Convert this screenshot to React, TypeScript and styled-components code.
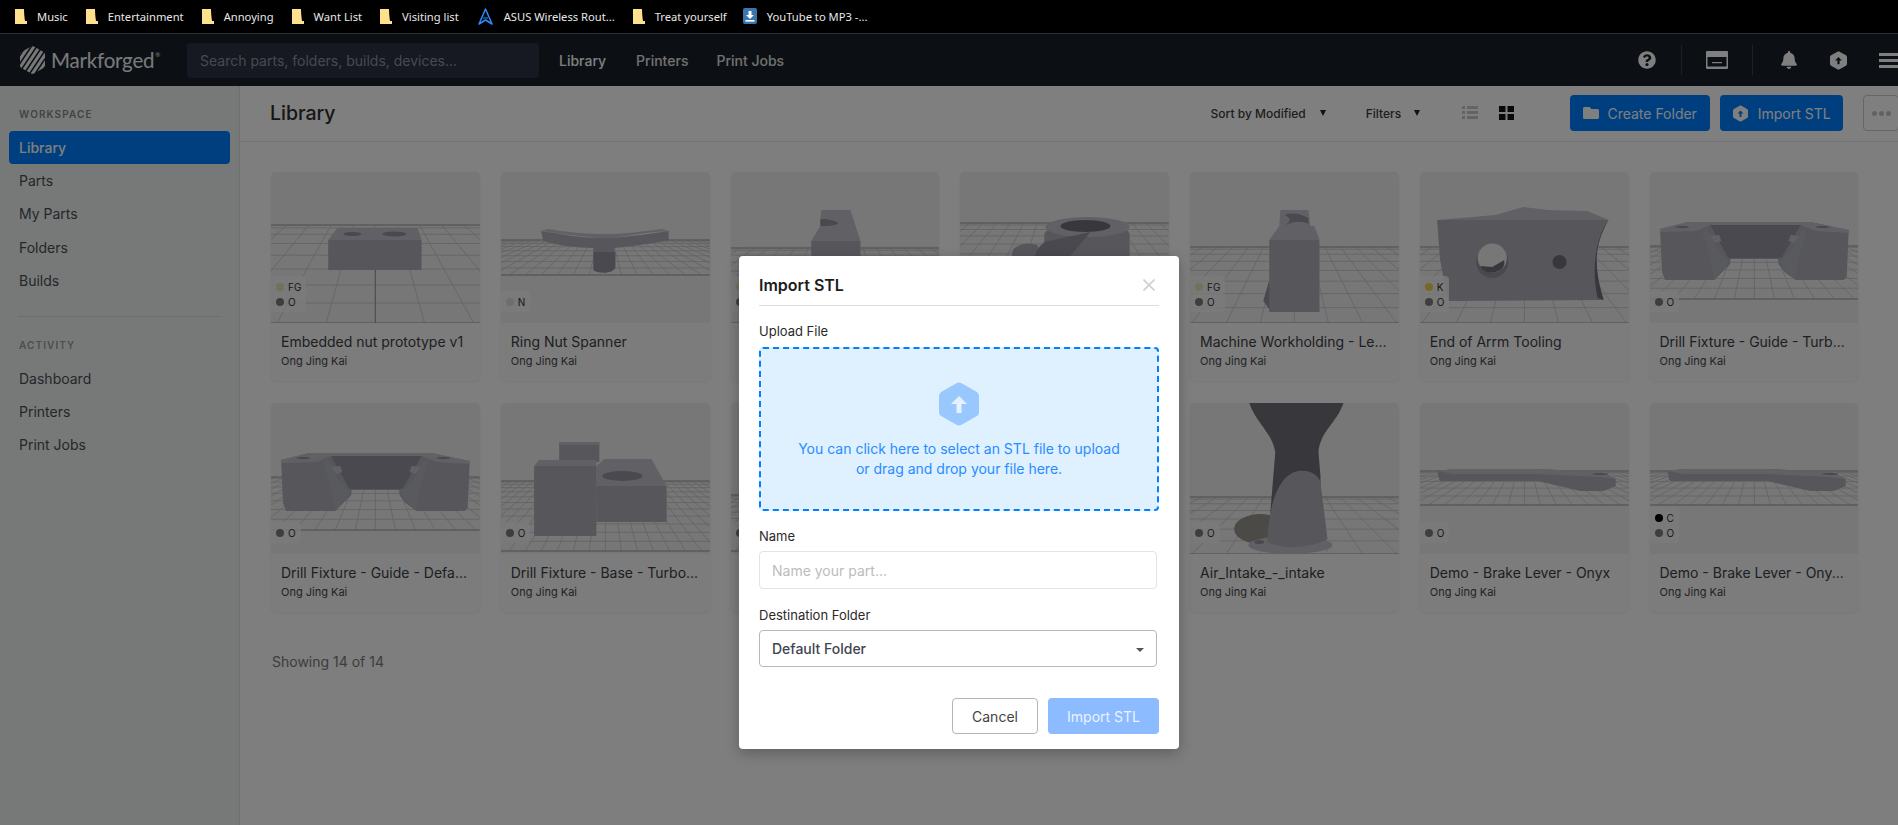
import React from "react";
import styled, { createGlobalStyle } from "styled-components";
import { FaBell, FaFolder, FaQuestionCircle } from "react-icons/fa";

const Global = createGlobalStyle`
  html, body { margin: 0; padding: 0; height: 100%; overflow: hidden; background: #000; }
  body { font-family: Inter, "Noto Sans", sans-serif; }
  * { box-sizing: border-box; }
`;

const Bookmarks = styled.div`
  height: 34px;
  background: #000;
  border-bottom: 1px solid #2c2f2f;
  display: flex;
  align-items: center;
  padding: 0 0 1px 15px;
  gap: 18px;
`;
const Bookmark = styled.div`
  display: flex;
  align-items: center;
  gap: 10px;
  color: #e8e8e8;
  font: 11.2px "Noto Sans", sans-serif;
  white-space: nowrap;
  &:last-child {
    margin-left: -2px;
  }
`;

const Page = styled.div`
  position: relative;
  height: 791px;
  overflow: hidden;
  display: flex;
  flex-direction: column;
`;
const TopBar = styled.div`
  height: 52px;
  flex: none;
  background: #19202a;
  display: flex;
  align-items: center;
  padding-left: 20px;
`;
const Logo = styled.div`
  display: flex;
  align-items: center;
  gap: 6px;
  width: 167px;
  color: #f4f4f4;
  font: 400 20.5px Lato, sans-serif;
  letter-spacing: -0.2px;
`;
const Reg = styled.sup`
  font-size: 6px;
  margin-left: 1px;
  vertical-align: 11px;
  line-height: 0;
`;
const Search = styled.div`
  width: 352px;
  height: 35px;
  background: #2d3342;
  border-radius: 4px;
  color: #8d93a1;
  font-size: 14px;
  display: flex;
  align-items: center;
  padding-left: 13px;
`;
const Nav = styled.div<{ $active?: boolean; $ml: number }>`
  margin-left: ${(p) => p.$ml}px;
  color: ${(p) => (p.$active ? "#ffffff" : "#e2e2e2")};
  font-size: 14px;
  font-weight: 500;
`;
const TopIcons = styled.div`
  margin-left: auto;
  display: flex;
  align-items: center;
  color: #ffffff;
`;
const IconSlot = styled.div<{ $ml: number }>`
  margin-left: ${(p) => p.$ml}px;
  display: flex;
  align-items: center;
`;
const VRule = styled.div<{ $ml: number }>`
  margin-left: ${(p) => p.$ml}px;
  width: 1px;
  height: 30px;
  background: #3b424d;
`;

const Body = styled.div`
  flex: 1;
  display: flex;
  min-height: 0;
`;
const Sidebar = styled.div`
  width: 240px;
  flex: none;
  background: #eef3f1;
  border-right: 1px solid #dde1e0;
  padding: 22px 9px 0;
`;
const SideHead = styled.div<{ $dim?: boolean }>`
  font-size: 10px;
  font-weight: 600;
  letter-spacing: 1.1px;
  line-height: 12px;
  margin-left: 10px;
  margin-bottom: 11px;
  color: ${(p) => (p.$dim ? "#9a9a9a" : "#868686")};
`;
const SideItem = styled.div<{ $active?: boolean }>`
  height: 33.2px;
  line-height: 33px;
  padding-left: 10px;
  font-size: 14px;
  border-radius: 4px;
  background: ${(p) => (p.$active ? "#007fff" : "transparent")};
  color: ${(p) => (p.$active ? "#ffffff" : "#4a4d55")};
  font-weight: ${(p) => (p.$active ? 500 : 400)};
`;
const SideRule = styled.div`
  height: 1px;
  background: #d9dcdb;
  margin: 19px 10px 22px 9px;
`;

const Main = styled.div`
  flex: 1;
  min-width: 0;
  background: #fcfcfc;
  display: flex;
  flex-direction: column;
`;
const Header = styled.div`
  height: 56px;
  flex: none;
  background: #fff;
  border-bottom: 1px solid #e4e4e4;
  display: flex;
  align-items: center;
  padding: 0 0 1px 30px;
`;
const Title = styled.div`
  width: 66px;
  font-size: 19.5px;
  font-weight: 500;
  color: #2c2c2c;
`;
const Tool = styled.div<{ $ml: number }>`
  margin-left: ${(p) => p.$ml}px;
  font-size: 12px;
  font-weight: 500;
  color: #3c3c3c;
  white-space: nowrap;
`;
const Caret = styled.div<{ $ml: number }>`
  margin-left: ${(p) => p.$ml}px;
  width: 0;
  height: 0;
  border-left: 3.5px solid transparent;
  border-right: 3.5px solid transparent;
  border-top: 6px solid #222;
`;
const ToolIcon = styled.div<{ $ml: number }>`
  margin-left: ${(p) => p.$ml}px;
  display: flex;
`;
const ToolRule = styled.div`
  margin-left: 10px;
  width: 1px;
  height: 18px;
  background: #ddd;
`;
const PrimaryButton = styled.div<{ $ml: number; $w: number; $gap: number }>`
  margin-left: ${(p) => p.$ml}px;
  width: ${(p) => p.$w}px;
  height: 36px;
  flex: none;
  border-radius: 4px;
  background: #007fff;
  color: #fff;
  font-size: 14px;
  font-weight: 400;
  display: flex;
  align-items: center;
  justify-content: center;
  gap: ${(p) => p.$gap}px;
`;
const MoreButton = styled.div`
  margin-left: 20px;
  width: 36px;
  height: 36px;
  flex: none;
  border: 1px solid #ccc;
  border-radius: 4px;
  display: flex;
  align-items: center;
  padding-left: 8px;
  gap: 2px;
`;
const MoreDot = styled.div`
  width: 5px;
  height: 5px;
  border-radius: 50%;
  background: #c4c4c4;
`;

const Grid = styled.div`
  display: grid;
  grid-template-columns: repeat(7, 208.75px);
  column-gap: 21px;
  row-gap: 22px;
  padding: 30px 0 0 31px;
`;
const Card = styled.div`
  height: 209px;
  background: #f8f8f8;
  border-radius: 5px;
  overflow: hidden;
  box-shadow: 0 1px 3px rgba(0, 0, 0, 0.06);
`;
const ThumbBox = styled.div`
  position: relative;
  height: 151px;
  background: #eeeeee;
`;
const ThumbSvg = styled.svg`
  display: block;
  width: 100%;
  height: 151px;
`;
const Badge = styled.div`
  position: absolute;
  left: 0;
  bottom: 11px;
  background: rgba(245, 245, 245, 0.85);
  border-radius: 0 4px 4px 0;
  padding: 3px 5px;
  display: flex;
  flex-direction: column;
`;
const BadgeRow = styled.div`
  display: flex;
  align-items: center;
  gap: 4px;
  height: 15px;
  font-size: 10px;
  color: #333;
`;
const Dot = styled.div<{ $c: string }>`
  width: 8px;
  height: 8px;
  border-radius: 50%;
  background: ${(p) => p.$c};
`;
const CardBody = styled.div`
  padding: 10px 10px 0 10px;
`;
const CardTitle = styled.div`
  font-size: 14px;
  line-height: 18px;
  color: #3c3f45;
  white-space: nowrap;
`;
const CardSub = styled.div`
  margin-top: 3px;
  font-size: 11px;
  line-height: 14px;
  color: #44474d;
`;
const Showing = styled.div`
  margin: 41px 0 0 32px;
  font-size: 14px;
  color: #7a7a7a;
`;

const Overlay = styled.div`
  position: absolute;
  inset: 0;
  background: rgba(0, 0, 0, 0.5);
`;
const Modal = styled.div`
  margin: 222px 0 0 739px;
  width: 440px;
  height: 493px;
  background: #fff;
  border-radius: 4px;
  box-shadow: 0 4px 14px rgba(0, 0, 0, 0.25);
  padding: 0 20px;
  display: flex;
  flex-direction: column;
`;
const ModalHead = styled.div`
  height: 50px;
  flex: none;
  border-bottom: 1px solid #dedede;
  display: flex;
  align-items: center;
  justify-content: space-between;
  padding: 9px 4px 0 0;
  font-size: 16px;
  font-weight: 600;
  color: #1c1c1c;
`;
const Label = styled.div<{ $mt: number }>`
  margin-top: ${(p) => p.$mt}px;
  font-size: 13px;
  line-height: 16px;
  color: #2a2a2a;
`;
const DropZone = styled.div`
  margin-top: 8px;
  height: 164px;
  border: 2px dashed #007fff;
  border-radius: 4px;
  background: #dff0ff;
  display: flex;
  flex-direction: column;
  align-items: center;
  padding-top: 33px;
  color: #2a8cff;
  font-size: 14px;
  line-height: 20px;
  text-align: center;
`;
const DropText = styled.div`
  margin-top: 13px;
`;
const Field = styled.div<{ $strong?: boolean }>`
  margin-top: 7px;
  width: 398px;
  height: ${(p) => (p.$strong ? 37 : 38)}px;
  flex: none;
  border: 1px solid ${(p) => (p.$strong ? "#b6b8bc" : "#e3e3e3")};
  border-radius: 4px;
  display: flex;
  align-items: center;
  justify-content: space-between;
  padding: 0 12px;
  font-size: 14px;
  font-weight: ${(p) => (p.$strong ? 500 : 400)};
  color: ${(p) => (p.$strong ? "#41454f" : "#bcbcbc")};
`;
const SelectCaret = styled.div`
  margin: 2px 0 0;
  width: 0;
  height: 0;
  border-left: 4px solid transparent;
  border-right: 4px solid transparent;
  border-top: 4px solid #555;
`;
const ModalFoot = styled.div`
  margin-top: 31px;
  display: flex;
  justify-content: flex-end;
  gap: 10px;
`;
const CancelButton = styled.div`
  width: 86px;
  height: 36px;
  border: 1px solid #b4b4b4;
  border-radius: 4px;
  color: #444;
  font-size: 14px;
  display: flex;
  align-items: center;
  justify-content: center;
`;
const ImportButton = styled.div`
  width: 111px;
  height: 36px;
  border-radius: 4px;
  background: #8cbcff;
  color: #eaf3ff;
  font-size: 14px;
  font-weight: 400;
  display: flex;
  align-items: center;
  justify-content: center;
`;

const FolderMark = () => (
  <svg width="12" height="15" viewBox="0 0 12 15">
    <path d="M0 0h9l1 12h2v3H0z" fill="#ffe08c" />
    <path d="M9 0l1 12h2L11 2z" fill="#000" opacity="0.85" />
  </svg>
);
const AsusMark = () => (
  <svg width="17" height="17" viewBox="0 0 17 17">
    <path d="M8.5 1L2 16l6.5-4 6.5 4z" fill="none" stroke="#2c8cff" strokeWidth="1.5" strokeLinejoin="round" />
    <path d="M6 10h5" stroke="#2c8cff" strokeWidth="1" />
  </svg>
);
const YtMark = () => (
  <svg width="14" height="16" viewBox="0 0 14 16">
    <rect width="14" height="16" rx="2" fill="#3a76ad" />
    <path d="M5.500 3h3v4H11L7 11 3 7h2.500z" fill="#fff" />
    <rect x="2.500" y="12" width="9" height="1.6" fill="#fff" />
  </svg>
);
const LogoMark = () => (
  <svg width="25" height="28" viewBox="0 0 25 28">
    <defs>
      <clipPath id="lg">
        <path d="M11 0.600a3 3 0 0 1 3 0l9.500 5.400a3 3 0 0 1 1.500 2.600v10.800a3 3 0 0 1-1.500 2.600l-9.500 5.400a3 3 0 0 1-3 0l-9.500-5.400A3 3 0 0 1 0 19.400V8.600a3 3 0 0 1 1.500-2.600z" />
      </clipPath>
    </defs>
    <g clipPath="url(#lg)" stroke="#f0f0f0" strokeWidth="3">
      {[-8, -2.500, 3, 8.500, 14, 19.500, 25, 30.500].map((o) => (
        <line key={o} x1={o - 10} y1="32" x2={o + 14} y2="-4" />
      ))}
    </g>
  </svg>
);
const HexUp = ({ w, h, fill, arrow }: { w: number; h: number; fill: string; arrow: string }) => (
  <svg width={w} height={h} viewBox="0 0 40 44">
    <path d="M17.5 1.2a5 5 0 0 1 5 0l15 8.6a5 5 0 0 1 2.5 4.3v15.8a5 5 0 0 1-2.5 4.3l-15 8.6a5 5 0 0 1-5 0l-15-8.6A5 5 0 0 1 0 29.9V14.100a5 5 0 0 1 2.5-4.3z" fill={fill} />
    <path d="M20 14l8 8h-5.500v9h-5v-9H12z" fill={arrow} />
  </svg>
);
const TrayIcon = () => (
  <svg width="22" height="18" viewBox="0 0 22 18">
    <rect width="22" height="18" rx="1" fill="currentColor" />
    <rect x="1.500" y="6" width="19" height="9.500" fill="#19202a" />
    <rect x="6" y="11" width="10" height="1.200" fill="currentColor" />
  </svg>
);
const MenuIcon = () => (
  <svg width="19" height="15" viewBox="0 0 19 15" fill="currentColor">
    <rect width="19" height="3" />
    <rect y="6" width="19" height="3" />
    <rect y="12" width="19" height="3" />
  </svg>
);
const ListIcon = () => (
  <svg width="16" height="14" viewBox="0 0 16 14" fill="#c9c9c9">
    {[0, 5, 10].map((y) => (
      <g key={y}>
        <rect x="0" y={y} width="3" height="3" />
        <rect x="5" y={y} width="11" height="3" />
      </g>
    ))}
  </svg>
);
const GridIcon = () => (
  <svg width="15" height="14" viewBox="0 0 15 14" fill="#111">
    <rect width="6.500" height="6" />
    <rect x="8.500" width="6.500" height="6" />
    <rect y="8" width="6.500" height="6" />
    <rect x="8.500" y="8" width="6.500" height="6" />
  </svg>
);

const FRONT = "#acadb6";
const TOP = "#c2c3cb";
const DARK = "#92939e";
const DEEP = "#6e6e78";

const Floor = ({ top, bottom, n = 9, r = 11, sp = 26, vx = 104 }: { top: number; bottom: number; n?: number; r?: number; sp?: number; vx?: number }) => {
  const rows = Array.from({ length: n + 1 }, (_, i) => top + (bottom - top) * Math.pow(i / n, 1.7));
  const rays = Array.from({ length: 2 * r + 1 }, (_, i) => i - r);
  return (
    <g stroke="#c6c6c6" strokeWidth="0.8">
      {rows.map((y) => (
        <line key={y} x1="0" y1={y} x2="208" y2={y} />
      ))}
      {rays.map((k) => (
        <line key={k} x1={vx + k * sp * 0.45} y1={top} x2={vx + k * sp} y2={bottom} />
      ))}
      <line x1="0" y1={top} x2="208" y2={top} stroke="#a8a8a8" strokeWidth="1" />
      <line x1="0" y1={bottom} x2="208" y2={bottom} stroke="#a8a8a8" strokeWidth="1" />
    </g>
  );
};

const Fixture = () => (
  <g>
    <path d="M10 57L38 50H160L198 58L196 105L193 108H145L134 100L128 92V87H80V92L72 100L64 108H15L12 100Z" fill={FRONT} />
    <path d="M10 57L38 50H160L198 58L198 61L165 59L150 53H60L46 59L10 60Z" fill={TOP} />
    <path d="M60 53H150L131 86H78Z" fill={DARK} />
    <path d="M57 56C62 72 70 82 78 88V92L70 100L64 108C62 90 56 72 52 60Z" fill="#b3b4bd" />
    <path d="M152 56C147 72 138 82 130 88V92L137 100L145 108C146 90 152 72 156 60Z" fill="#b3b4bd" />
    <path d="M60 64l9-1 2 6-6 2z" fill={TOP} />
    <path d="M149 64l-9-1-2 6 6 2z" fill={TOP} />
    <ellipse cx="32" cy="55" rx="7" ry="1.200" fill={DARK} />
    <ellipse cx="172" cy="55" rx="7" ry="1.200" fill={DARK} />
  </g>
);
const Lever = () => (
  <g>
    <path d="M18 68L33 66H117L180 69L195 76V83L183 88H160L117 78H33L20 78L18 73Z" fill={FRONT} />
    <path d="M18 68L33 66H117L180 69L195 76L180 74L117 71H33Z" fill={TOP} />
    <ellipse cx="180" cy="71" rx="8" ry="1" fill={DARK} />
  </g>
);

const models: Record<string, React.ReactNode> = {
  nut: (
    <g>
      <Floor top={53} bottom={151} n={8} r={6} sp={49} />
      <line x1="104" y1="98" x2="104" y2="151" stroke="#a0a0a0" strokeWidth="1.200" />
      <path d="M57 68L66 56H146L150 68Z" fill={TOP} />
      <rect x="57" y="68" width="93" height="30" fill={FRONT} />
      <ellipse cx="81" cy="62" rx="9" ry="2" fill={DARK} />
      <ellipse cx="123" cy="62" rx="12" ry="2.500" fill={DARK} />
    </g>
  ),
  spanner: (
    <g>
      <Floor top={68} bottom={103} n={8} r={18} sp={16} />
      <path d="M40 59C60 62 80 66 94 66H112C130 64 150 62 167 59V68C150 72 130 74 113 76V88H92V76C75 76 55 73 42 69Z" fill={FRONT} />
      <path d="M40 59C60 62 80 64 94 66H112C130 63 150 60 167 59L160 57C140 60 120 62 100 62C80 62 60 59 47 57Z" fill={TOP} />
      <path d="M92 80H114V96C110 102 96 102 92 98Z" fill={DARK} />
    </g>
  ),
  block3: (
    <g>
      <Floor top={76} bottom={151} n={8} r={10} sp={30} />
      <path d="M90 38H119L129 69H80L89 54V49L90 38Z" fill={TOP} />
      <path d="M89 47C98 47 105 49 107 51C105 54 96 54 89 54Z" fill={DARK} />
      <rect x="80" y="69" width="49" height="71" fill={FRONT} />
    </g>
  ),
  cylinder: (
    <g>
      <Floor top={51} bottom={151} n={10} r={10} sp={30} />
      <path d="M84 62C90 46 165 46 169 62V120H84Z" fill={FRONT} />
      <ellipse cx="127" cy="55" rx="42" ry="10" fill={TOP} />
      <ellipse cx="125" cy="54" rx="25" ry="6" fill={DEEP} />
      <path d="M84 70L130 60L110 84H70Z" fill={DARK} />
      <path d="M52 80C55 70 75 70 78 74L70 100H52Z" fill={FRONT} />
    </g>
  ),
  work: (
    <g>
      <Floor top={75} bottom={151} n={8} r={9} sp={34} />
      <path d="M79 108L73 129L81 140Z" fill={DARK} />
      <path d="M90 38H118L120 54H124L129 68H79L89 54Z" fill={TOP} />
      <path d="M94 43C104 40 110 42 118 46L118 52C110 48 100 50 94 54C102 48 100 46 94 43Z" fill={DARK} />
      <rect x="79" y="68" width="50" height="72" fill={FRONT} />
    </g>
  ),
  tool: (
    <g>
      <Floor top={75} bottom={151} n={8} r={9} sp={34} />
      <path d="M17 48L75 43L103 35L127 38L167 39L188 48Z" fill={TOP} />
      <path d="M17 48H188C182 58 176 72 176 88C176 104 180 118 183 128L28 129L20 88Z" fill={FRONT} />
      <path d="M188 48C182 58 176 72 176 88C176 104 180 118 183 128L177 126C172 105 172 70 188 48Z" fill={DEEP} />
      <circle cx="72" cy="90" r="16" fill={DARK} />
      <circle cx="72" cy="86" r="14.500" fill="#eeeeee" />
      <path d="M60 94L72 95L84 88L84 92C82 102 64 104 60 94Z" fill={DEEP} />
      <circle cx="139" cy="90" r="7" fill={DEEP} />
    </g>
  ),
  fixture: (
    <g>
      <Floor top={74} bottom={127} n={8} r={14} sp={20} />
      <Fixture />
    </g>
  ),
  base: (
    <g>
      <Floor top={78} bottom={148} n={12} r={18} sp={16} />
      <rect x="58" y="39" width="40" height="20" fill={FRONT} />
      <path d="M58 39H98V42H58Z" fill={TOP} />
      <path d="M95 63L103 56H150L165 83H95Z" fill={TOP} />
      <ellipse cx="121" cy="73" rx="20" ry="5" fill={DARK} />
      <rect x="95" y="83" width="70" height="36" fill={FRONT} />
      <path d="M33 63L38 57H95V63Z" fill={TOP} />
      <rect x="33" y="63" width="62" height="70" fill={FRONT} />
    </g>
  ),
  empty: <Floor top={92} bottom={148} n={10} r={14} sp={20} />,
  intake: (
    <g>
      <Floor top={94} bottom={151} n={7} r={9} sp={34} />
      <ellipse cx="70" cy="126" rx="26" ry="15" fill="#96948f" />
      <path d="M59 0H153C146 20 130 28 128 49L130 73V110H80L85 49C82 30 66 20 59 0Z" fill={DEEP} />
      <ellipse cx="100" cy="142" rx="42" ry="9" fill={TOP} />
      <path d="M77 139C78 110 85 72 108 68C120 66 129 73 130 80L137 136C120 146 90 146 77 139Z" fill={FRONT} />
      <ellipse cx="69" cy="139" rx="5" ry="2" fill={DARK} />
    </g>
  ),
  lever: (
    <g>
      <Floor top={68} bottom={102} n={6} r={18} sp={16} />
      <Lever />
    </g>
  ),
};

type Mat = [string, string];
const FG: Mat = ["#dbe8b6", "FG"];
const O: Mat = ["#7c7c7c", "O"];
const N: Mat = ["#dddddd", "N"];
const K: Mat = ["#ecd04e", "K"];
const C: Mat = ["#000000", "C"];

const cards: { name: string; model: string; mats: Mat[] }[] = [
  { name: "Embedded nut prototype v1", model: "nut", mats: [FG, O] },
  { name: "Ring Nut Spanner", model: "spanner", mats: [N] },
  { name: "Machine Workholding - Ri...", model: "block3", mats: [FG, O] },
  { name: "Mounting Bracket", model: "cylinder", mats: [O] },
  { name: "Machine Workholding - Le...", model: "work", mats: [FG, O] },
  { name: "End of Arrm Tooling", model: "tool", mats: [K, O] },
  { name: "Drill Fixture - Guide - Turb...", model: "fixture", mats: [O] },
  { name: "Drill Fixture - Guide - Defa...", model: "fixture", mats: [O] },
  { name: "Drill Fixture - Base - Turbo...", model: "base", mats: [O] },
  { name: "Drill Fixture - Base - Defa...", model: "empty", mats: [O] },
  { name: "Air_Intake_-_body", model: "empty", mats: [O] },
  { name: "Air_Intake_-_intake", model: "intake", mats: [O] },
  { name: "Demo - Brake Lever - Onyx", model: "lever", mats: [O] },
  { name: "Demo - Brake Lever - Ony...", model: "lever", mats: [C, O] },
];

const bookmarks: { label: string; icon: React.ReactNode }[] = [
  { label: "Music", icon: <FolderMark /> },
  { label: "Entertainment", icon: <FolderMark /> },
  { label: "Annoying", icon: <FolderMark /> },
  { label: "Want List", icon: <FolderMark /> },
  { label: "Visiting list", icon: <FolderMark /> },
  { label: "ASUS Wireless Rout...", icon: <AsusMark /> },
  { label: "Treat yourself", icon: <FolderMark /> },
  { label: "YouTube to MP3 -...", icon: <YtMark /> },
];

export default function App() {
  return (
    <>
      <Global />
      <Bookmarks>
        {bookmarks.map((b) => (
          <Bookmark key={b.label}>
            {b.icon}
            {b.label}
          </Bookmark>
        ))}
      </Bookmarks>
      <Page>
        <TopBar>
          <Logo>
            <LogoMark />
            <span>
              Markforged<Reg>®</Reg>
            </span>
          </Logo>
          <Search>Search parts, folders, builds, devices...</Search>
          <Nav $active $ml={20}>Library</Nav>
          <Nav $ml={30}>Printers</Nav>
          <Nav $ml={28}>Print Jobs</Nav>
          <TopIcons>
            <IconSlot $ml={0}><FaQuestionCircle size={18} /></IconSlot>
            <VRule $ml={25} />
            <IconSlot $ml={24}><TrayIcon /></IconSlot>
            <VRule $ml={24} />
            <IconSlot $ml={27}><FaBell size={18} /></IconSlot>
            <IconSlot $ml={32}><HexUp w={17} h={19} fill="#ffffff" arrow="#19202a" /></IconSlot>
            <IconSlot $ml={32}><MenuIcon /></IconSlot>
          </TopIcons>
        </TopBar>
        <Body>
          <Sidebar>
            <SideHead>WORKSPACE</SideHead>
            <SideItem $active>Library</SideItem>
            <SideItem>Parts</SideItem>
            <SideItem>My Parts</SideItem>
            <SideItem>Folders</SideItem>
            <SideItem>Builds</SideItem>
            <SideRule />
            <SideHead $dim>ACTIVITY</SideHead>
            <SideItem>Dashboard</SideItem>
            <SideItem>Printers</SideItem>
            <SideItem>Print Jobs</SideItem>
          </Sidebar>
          <Main>
            <Header>
              <Title>Library</Title>
              <Tool $ml={875}>Sort by Modified</Tool>
              <Caret $ml={14} />
              <Tool $ml={40}>Filters</Tool>
              <Caret $ml={13} />
              <ToolIcon $ml={42}><ListIcon /></ToolIcon>
              <ToolRule />
              <ToolIcon $ml={11}><GridIcon /></ToolIcon>
              <PrimaryButton $ml={56} $w={140} $gap={8}>
                <FaFolder size={16} />
                Create Folder
              </PrimaryButton>
              <PrimaryButton $ml={10} $w={123} $gap={10}>
                <HexUp w={15} h={17} fill="#ffffff" arrow="#007fff" />
                Import STL
              </PrimaryButton>
              <MoreButton>
                <MoreDot />
                <MoreDot />
                <MoreDot />
              </MoreButton>
            </Header>
            <Grid>
              {cards.map((c) => (
                <Card key={c.name}>
                  <ThumbBox>
                    <ThumbSvg viewBox="0 0 208 151" preserveAspectRatio="none">
                      {models[c.model]}
                    </ThumbSvg>
                    <Badge>
                      {c.mats.map((m) => (
                        <BadgeRow key={m[1]}>
                          <Dot $c={m[0]} />
                          {m[1]}
                        </BadgeRow>
                      ))}
                    </Badge>
                  </ThumbBox>
                  <CardBody>
                    <CardTitle>{c.name}</CardTitle>
                    <CardSub>Ong Jing Kai</CardSub>
                  </CardBody>
                </Card>
              ))}
            </Grid>
            <Showing>Showing 14 of 14</Showing>
          </Main>
        </Body>
        <Overlay>
          <Modal>
            <ModalHead>
              Import STL
              <svg width="12" height="12" viewBox="0 0 12 12" stroke="#cfcfcf" strokeWidth="1.600">
                <path d="M0.500 0.500L11.500 11.500M11.500 0.500L0.500 11.500" />
              </svg>
            </ModalHead>
            <Label $mt={17}>Upload File</Label>
            <DropZone>
              <HexUp w={40} h={44} fill="#99c8ff" arrow="#e4f1ff" />
              <DropText>
                You can click here to select an STL file to upload
                <br />
                or drag and drop your file here.
              </DropText>
            </DropZone>
            <Label $mt={17}>Name</Label>
            <Field>Name your part...</Field>
            <Label $mt={18}>Destination Folder</Label>
            <Field $strong>
              Default Folder
              <SelectCaret />
            </Field>
            <ModalFoot>
              <CancelButton>Cancel</CancelButton>
              <ImportButton>Import STL</ImportButton>
            </ModalFoot>
          </Modal>
        </Overlay>
      </Page>
    </>
  );
}
